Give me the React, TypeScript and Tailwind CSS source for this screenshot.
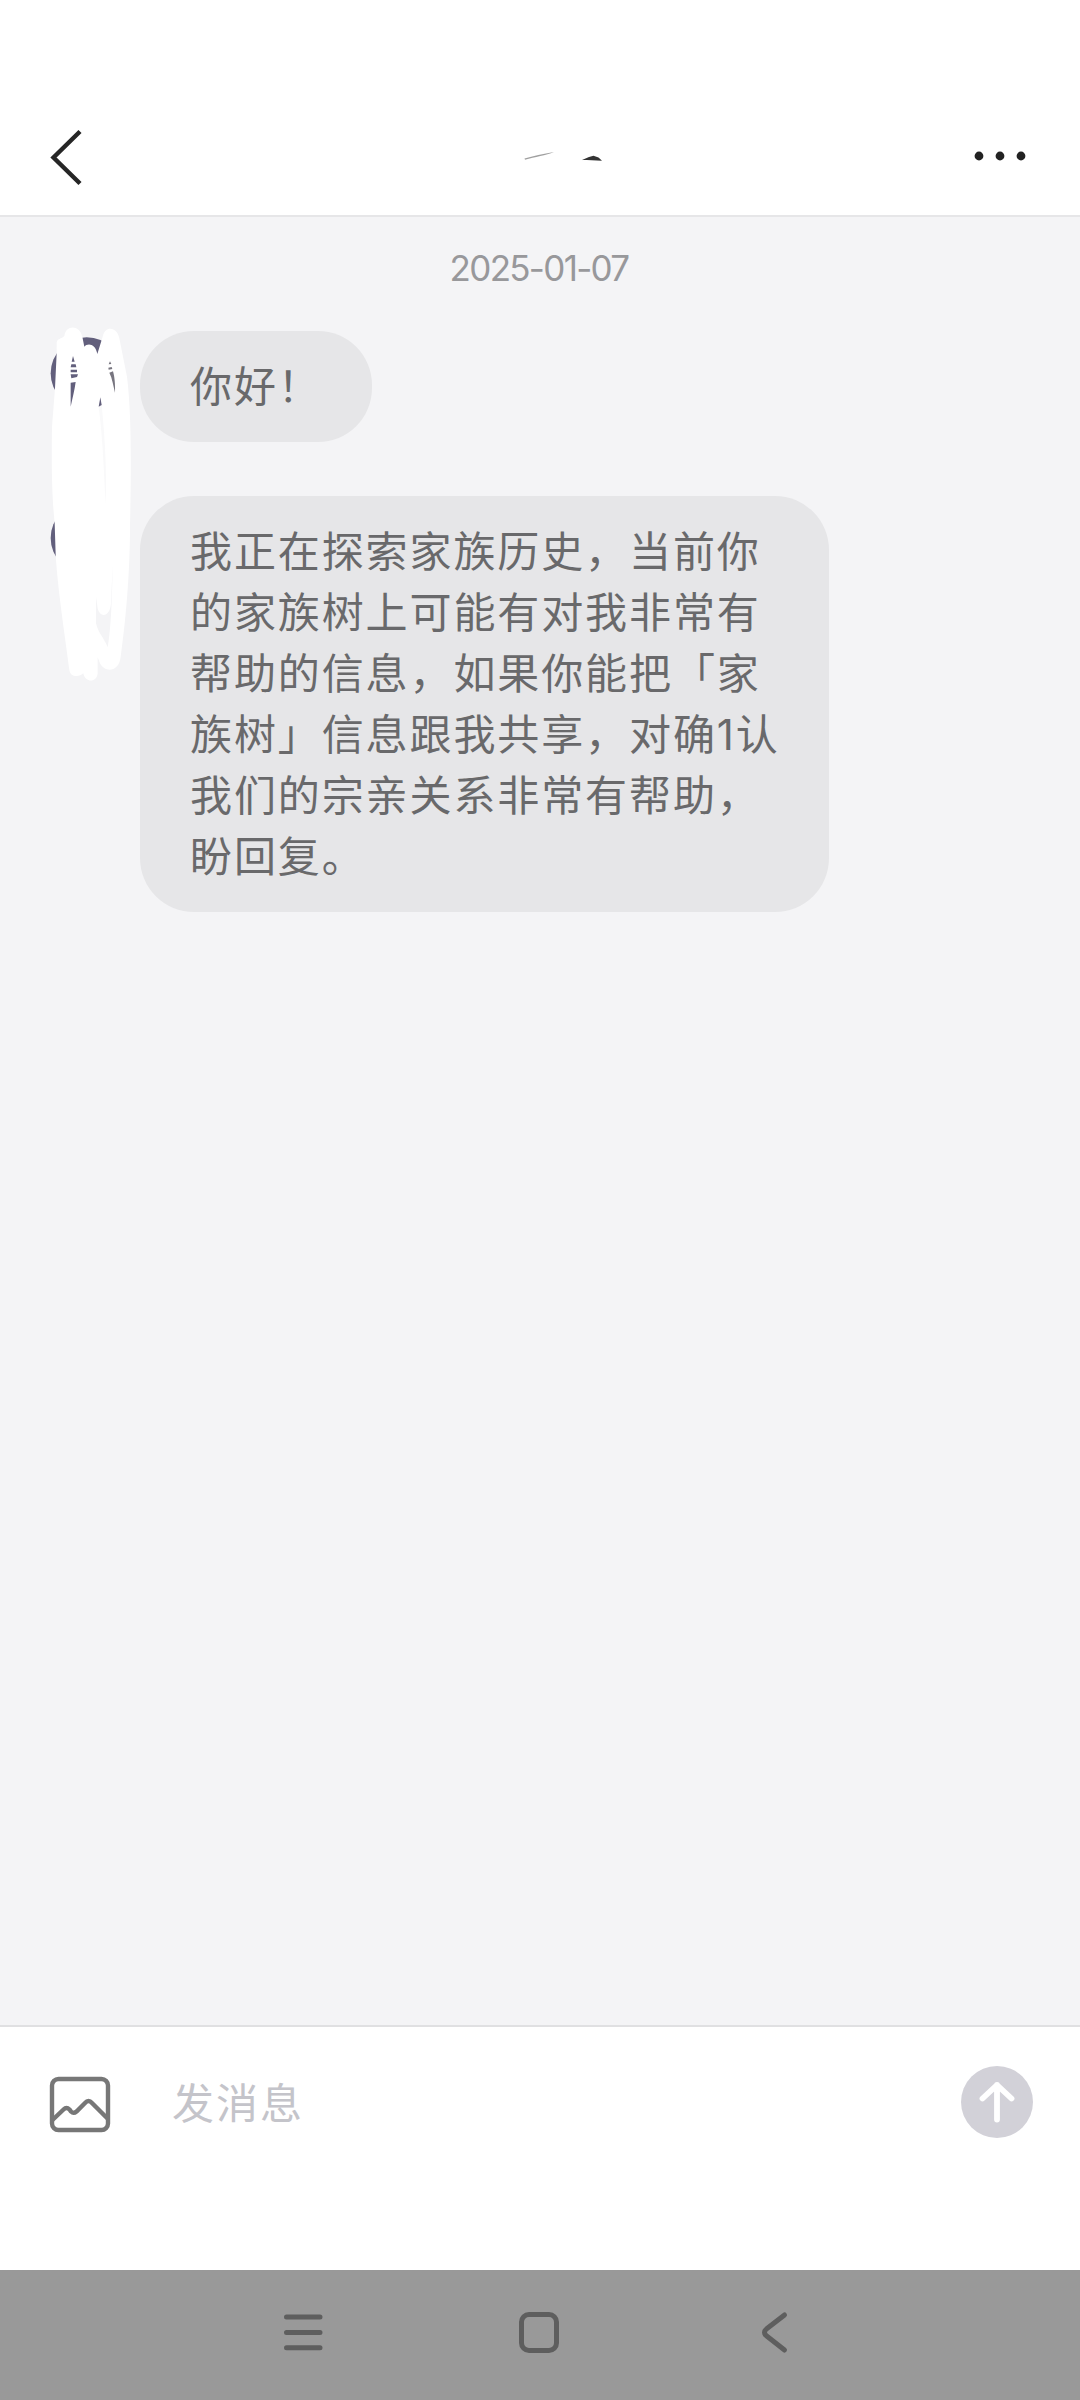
import React from "react";

const messages = [
  { id: 1, lines: ["你好！"] },
  {
    id: 2,
    lines: [
      "我正在探索家族历史，当前你",
      "的家族树上可能有对我非常有",
      "帮助的信息，如果你能把「家",
      "族树」信息跟我共享，对确1认",
      "我们的宗亲关系非常有帮助，",
      "盼回复。",
    ],
  },
];

function Header() {
  return (
    <header className="flex h-[217px] items-start justify-between border-b-2 border-[#e6e6e8] bg-white px-12 pt-[125px]">
      <svg width="40" height="64" viewBox="0 0 40 64" fill="none">
        <path d="M32 6.500 L5.500 32.500 L32 58.500" stroke="#262626" strokeWidth="4.4" />
      </svg>
      <svg width="90" height="20" viewBox="0 0 90 20" className="mt-[25px] ml-[59px]">
        <path d="M9.500 8.600 C18 6 28 4 39 2 C31 5.500 20 6.800 10 9.800 Z" fill="#a0a0a0" />
        <path d="M67 10 L74 7 L78.500 5.800 L83.500 7.500 L87 10.800 C80 10 73 10.600 67 10 Z" fill="#333" />
      </svg>
      <svg width="56" height="20" viewBox="0 0 56 20" className="mt-[21px] mr-[4px]" fill="#222">
        <circle cx="7" cy="10" r="4.4" />
        <circle cx="28" cy="10" r="4.4" />
        <circle cx="49" cy="10" r="4.4" />
      </svg>
    </header>
  );
}

// Avatars with a white marker scribble on top
function Avatars() {
  return (
    <svg width="120" height="380" viewBox="0 0 360 1140" className="shrink-0">
      <circle cx="170" cy="190" r="108" fill="#625f7c" />
      <circle cx="170" cy="684" r="108" fill="#625f7c" />
      <path
        fill="#fff"
        d="M80 100 C80 85 95 87 103 78 C108 44 148 44 157 80 L163 110 C172 98 197 100 202 132 L218 80 C225 45 262 50 268 85 L291 200 C306 320 303 500 300 650 C300 800 285 950 272 1040 C268 1085 225 1090 210 1060 L203 1042 L203 1090 C200 1120 165 1118 160 1090 C150 1100 122 1105 118 1080 C110 1010 84 850 77 735 L74 640 C66 560 64 470 66 350 L75 235 L80 130 Z"
      />
      <path fill="#f9f9fa" d="M206 290 L215 285 C226 400 230 480 227 585 C222 500 220 400 206 290 Z" />
      <path
        fill="#f4f4f6"
        d="M248 762 L243 880 C240 922 210 925 203 895 L198 860 L198 940 C205 970 220 980 233 1012 C243 960 247 850 248 762 Z"
      />
      <g fill="#625f7c">
        <path d="M129 138 L134 155 L125 155 Z M124 163 L137 163 L139 172 L122 172 Z M122 179 L141 179 L141 187 L122 187 Z M122 193 L144 193 L141 201 L124 205 Z M122 218 L137 216 C134 240 127 265 122 290 Z" />
        <path d="M211 262 L215 285 L206 290 Z" />
      </g>
      <g fill="#77757f">
        <path d="M240 154 L244 162 L236 163 Z M235 173 L245 171 L247 177 L236 179 Z M238 188 L249 184 C254 200 256 225 255 248 C250 228 247 205 238 188 Z" />
      </g>
    </svg>
  );
}

function Bubble({ lines }: { lines: string[] }) {
  return (
    <div className="w-fit max-w-[689px] rounded-[54px] bg-[#e6e6e8] px-[50px] py-[25px] font-['Inter','Noto_Sans_CJK_SC',sans-serif] text-[42px] leading-[61px] tracking-[1.9px] text-[#69696b]">
      {lines.map((line) => (
        <p key={line} className="whitespace-nowrap">
          {line}
        </p>
      ))}
    </div>
  );
}

function Composer() {
  return (
    <div className="flex h-[245px] items-start border-t-2 border-[#e0e0e2] bg-white pr-[47px] pl-12 pt-[39px]">
      <svg width="64" height="60" viewBox="0 0 64 60" className="mt-[7px]" fill="none" stroke="#777" strokeWidth="4.4">
        <rect x="4" y="6" width="56" height="51" rx="6.500" />
        <path d="M4.500 47 L15.500 36.500 Q18.500 33.500 21.500 36.500 L23 38.500 Q25.500 41 28.500 38.500 L37 30 Q40.500 26 44 30 L59.500 45.500" />
      </svg>
      <span className="mt-[4px] ml-[60px] text-[42px] leading-[61px] tracking-[2px] text-[#c4c4ca]">发消息</span>
      <div className="ml-auto flex size-[72px] items-center justify-center rounded-full bg-[#d2d1d8]">
        <svg width="40" height="46" viewBox="0 0 40 46" fill="none" stroke="#fff" strokeWidth="5.800" strokeLinecap="round" strokeLinejoin="round" className="-ml-px">
          <path d="M20 40.500 V6 M5.500 19.500 L20 6 L34.500 19.500" />
        </svg>
      </div>
    </div>
  );
}

function SystemNav() {
  return (
    <nav className="flex h-[130px] items-start bg-[#999] pt-10 pl-[280px]">
      <svg width="46" height="46" viewBox="0 0 46 46" stroke="#5e5e5e" strokeWidth="5" strokeLinecap="round">
        <path d="M6.500 7 H40 M6.500 22.400 H40 M6.500 37.800 H40" />
      </svg>
      <svg width="46" height="46" viewBox="0 0 46 46" className="ml-[190px]" fill="none" stroke="#5e5e5e" strokeWidth="5">
        <rect x="5.500" y="4.500" width="35" height="36" rx="7.500" />
      </svg>
      <svg width="46" height="46" viewBox="0 0 46 46" className="ml-[190px]" fill="none" stroke="#5e5e5e" strokeWidth="5" strokeLinecap="round">
        <path d="M32.500 5 L15 18.500 Q10 22.400 15 26.300 L32.500 40" />
      </svg>
    </nav>
  );
}

export default function App() {
  return (
    <div className="flex h-[2400px] w-[1080px] flex-col bg-[#f4f4f6] font-['Noto_Sans_CJK_SC',sans-serif]">
      <Header />
      <main className="flex-1">
        <div className="pt-[26px] pr-[2px] text-center font-['Inter',sans-serif] text-[35px] leading-[50px] tracking-[-1.7px] text-[#98989b]">
          2025-01-07
        </div>
        <div className="flex pt-[17px] pl-[30px]">
          <Avatars />
          <section className="-ml-[10px] flex flex-col gap-[54px] pt-[21px]">
            {messages.map((m) => (
              <Bubble key={m.id} lines={m.lines} />
            ))}
          </section>
        </div>
      </main>
      <Composer />
      <SystemNav />
    </div>
  );
}
